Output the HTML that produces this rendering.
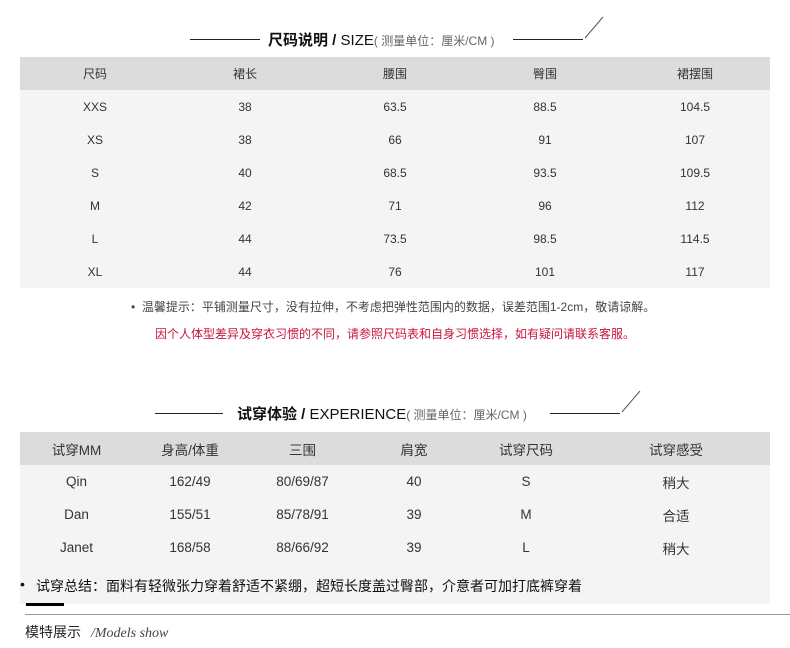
<!DOCTYPE html>
<html><head><meta charset="utf-8">
<style>
*{margin:0;padding:0;box-sizing:border-box}
body{width:790px;height:648px;background:#fff;position:relative;overflow:hidden;font-family:"Liberation Sans","Noto Sans CJK SC",sans-serif;color:#333}
.abs{position:absolute}
.line{position:absolute;height:1px;background:#222}
table{border-collapse:collapse;position:absolute;table-layout:fixed}
td{text-align:center;padding:0;height:33px;vertical-align:middle}
.t1{left:20px;top:57px;width:750px;font-size:12px;background:#f4f4f4}
.t1 tr:first-child td{background:#dcdcdc}
.t2{left:20px;top:432px;width:750px;font-size:13.5px;background:#f4f4f4}
.t2 tr:first-child td{background:#dcdcdc}
.title{font-size:15px;color:#111;white-space:nowrap}
.title b{font-weight:bold}
.title small{font-size:12px;color:#666}
</style></head><body>

<div class="line" style="left:190px;top:39px;width:70px"></div>
<div class="abs title" style="left:268px;top:29px"><b>尺码说明 / </b>SIZE<small>( 测量单位：厘米/CM )</small></div>
<div class="line" style="left:513px;top:39px;width:70px"></div>
<svg class="abs" style="left:580px;top:14px" width="30" height="28"><line x1="5" y1="24" x2="23" y2="3" stroke="#555" stroke-width="1"/></svg>

<table class="t1">
<tr><td>尺码</td><td>裙长</td><td>腰围</td><td>臀围</td><td>裙摆围</td></tr>
<tr><td>XXS</td><td>38</td><td>63.5</td><td>88.5</td><td>104.5</td></tr>
<tr><td>XS</td><td>38</td><td>66</td><td>91</td><td>107</td></tr>
<tr><td>S</td><td>40</td><td>68.5</td><td>93.5</td><td>109.5</td></tr>
<tr><td>M</td><td>42</td><td>71</td><td>96</td><td>112</td></tr>
<tr><td>L</td><td>44</td><td>73.5</td><td>98.5</td><td>114.5</td></tr>
<tr><td>XL</td><td>44</td><td>76</td><td>101</td><td>117</td></tr>
</table>

<div class="abs" style="left:131px;top:298px;font-size:12px;color:#444;white-space:nowrap">•&nbsp;&nbsp;温馨提示：平铺测量尺寸，没有拉伸，不考虑把弹性范围内的数据，误差范围1-2cm，敬请谅解。</div>
<div class="abs" style="left:155px;top:325px;font-size:12px;color:#c8153f;white-space:nowrap">因个人体型差异及穿衣习惯的不同，请参照尺码表和自身习惯选择，如有疑问请联系客服。</div>

<div class="line" style="left:155px;top:413px;width:68px"></div>
<div class="abs title" style="left:237px;top:403px"><b>试穿体验 / </b>EXPERIENCE<small>( 测量单位：厘米/CM )</small></div>
<div class="line" style="left:550px;top:413px;width:70px"></div>
<svg class="abs" style="left:617px;top:388px" width="30" height="28"><line x1="5" y1="24" x2="23" y2="3" stroke="#555" stroke-width="1"/></svg>

<div class="abs" style="left:20px;top:564px;width:750px;height:40px;background:#f4f4f4"></div>
<table class="t2">
<col style="width:113px"><col style="width:114px"><col style="width:111px"><col style="width:112px"><col style="width:112px"><col style="width:188px">
<tr><td>试穿MM</td><td>身高/体重</td><td>三围</td><td>肩宽</td><td>试穿尺码</td><td>试穿感受</td></tr>
<tr><td>Qin</td><td>162/49</td><td>80/69/87</td><td>40</td><td>S</td><td>稍大</td></tr>
<tr><td>Dan</td><td>155/51</td><td>85/78/91</td><td>39</td><td>M</td><td>合适</td></tr>
<tr><td>Janet</td><td>168/58</td><td>88/66/92</td><td>39</td><td>L</td><td>稍大</td></tr>
</table>
<div class="abs" style="left:20px;top:576px;font-size:14px;color:#111;white-space:nowrap">•</div>
<div class="abs" style="left:36px;top:576px;font-size:14px;color:#111;white-space:nowrap">试穿总结：面料有轻微张力穿着舒适不紧绷，超短长度盖过臀部，介意者可加打底裤穿着</div>

<div class="abs" style="left:26px;top:603px;width:38px;height:3px;background:#000"></div>
<div class="abs" style="left:25px;top:614px;width:765px;height:1px;background:#999"></div>
<div class="abs" style="left:25px;top:623px;font-size:14px;line-height:18px;color:#222;white-space:nowrap">模特展示</div>
<div class="abs" style="left:91px;top:625px;font-size:14px;line-height:18px;color:#444;white-space:nowrap;font-family:'Liberation Serif',serif;font-style:italic">/Models show</div>

</body></html>
